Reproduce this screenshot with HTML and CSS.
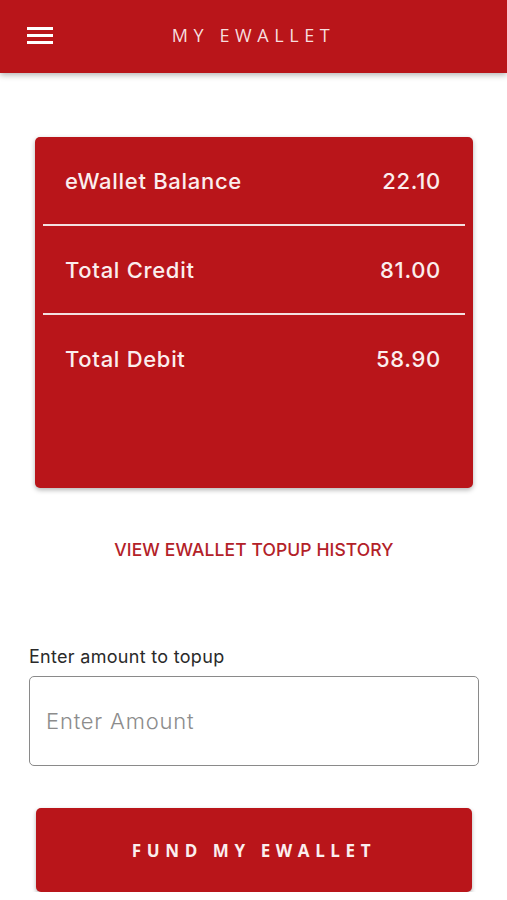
FILE: index.html
```html
<!DOCTYPE html>
<html lang="en">
<head>
    <meta charset="UTF-8">
    <title>My eWallet</title>
    <meta name="viewport" content="width=device-width, initial-scale=1">
    <link rel="stylesheet" href="styles.css">
</head>
<body>
<header class="topbar">
    <button class="menu-btn" aria-label="Menu">
        <svg width="26" height="18" viewBox="0 0 26 18">
            <rect x="0" y="1" width="26" height="3" fill="#fff"/>
            <rect x="0" y="8" width="26" height="3" fill="#fff"/>
            <rect x="0" y="15" width="26" height="3" fill="#fff"/>
        </svg>
    </button>
    <h1 class="title">MY EWALLET</h1>
</header>

<main class="content">
    <section class="card">
        <div class="row">
            <span>eWallet Balance</span>
            <span>22.10</span>
        </div>
        <hr class="divider">
        <div class="row">
            <span>Total Credit</span>
            <span>81.00</span>
        </div>
        <hr class="divider">
        <div class="row">
            <span>Total Debit</span>
            <span>58.90</span>
        </div>
    </section>

    <a class="history-link" href="#">VIEW EWALLET TOPUP HISTORY</a>

    <label class="field-label" for="amount">Enter amount to topup</label>
    <input id="amount" class="amount-input" type="text" placeholder="Enter Amount">

    <button class="fund-btn">FUND MY EWALLET</button>
</main>
</body>
</html>
```

FILE: styles.css
```css
body {
    margin: 0;
    font-family: Inter, "Open Sans", sans-serif;
    background: #fff;
}

.topbar {
    height: 73px;
    background: #b9151a;
    box-shadow: 0 2px 6px rgba(0, 0, 0, 0.3);
    display: flex;
    align-items: center;
    position: relative;
}

.menu-btn {
    background: none;
    border: 0;
    padding: 0;
    margin-left: 27px;
    margin-top: -3px;
    display: flex;
    cursor: pointer;
}

.title {
    position: absolute;
    left: 0;
    right: 0;
    top: 23px;
    margin: 0;
    text-align: center;
    font-family: "Open Sans", sans-serif;
    font-weight: 400;
    font-size: 18px;
    letter-spacing: 5.6px;
    color: #f6dede;
    pointer-events: none;
}

.content {
    padding: 64px 28px 0 29px;
    display: flex;
    flex-direction: column;
}

.card {
    margin: 0 6px;
    height: 351px;
    background: #b9151a;
    border-radius: 5px;
    box-shadow: 0 2px 5px rgba(0, 0, 0, 0.3);
    color: #fbeeee;
    display: flex;
    flex-direction: column;
}

.row {
    height: 87px;
    padding: 0 32px 0 30px;
    display: flex;
    justify-content: space-between;
    align-items: center;
    font-size: 22px;
    font-weight: 500;
    letter-spacing: 0.7px;
}

.divider {
    margin: 0 8px;
    border: 0;
    height: 2px;
    flex-shrink: 0;
    background: #f3e0e0;
}

.history-link {
    margin-top: 51px;
    text-align: center;
    color: #b32128;
    font-size: 17.5px;
    font-weight: 500;
    letter-spacing: 0.1px;
    text-decoration: none;
}

.field-label {
    margin-top: 86px;
    font-size: 18px;
    letter-spacing: 0.3px;
    color: #2a2a2a;
}

.amount-input {
    margin-top: 9px;
    height: 90px;
    box-sizing: border-box;
    border: 1px solid #8a8a8a;
    border-radius: 5px;
    padding: 0 16px;
    font-family: Inter, sans-serif;
    font-size: 22px;
    font-weight: 300;
    letter-spacing: 0.8px;
}

.amount-input::placeholder {
    color: #8c8c8c;
}

.fund-btn {
    margin: 42px 7px 0 7px;
    height: 84px;
    border: 0;
    border-radius: 5px;
    background: #b9151a;
    box-shadow: 0 2px 4px rgba(0, 0, 0, 0.3);
    color: #fbeeee;
    font-family: "Open Sans", sans-serif;
    font-weight: 700;
    font-size: 17px;
    letter-spacing: 5.6px;
    cursor: pointer;
}
```
